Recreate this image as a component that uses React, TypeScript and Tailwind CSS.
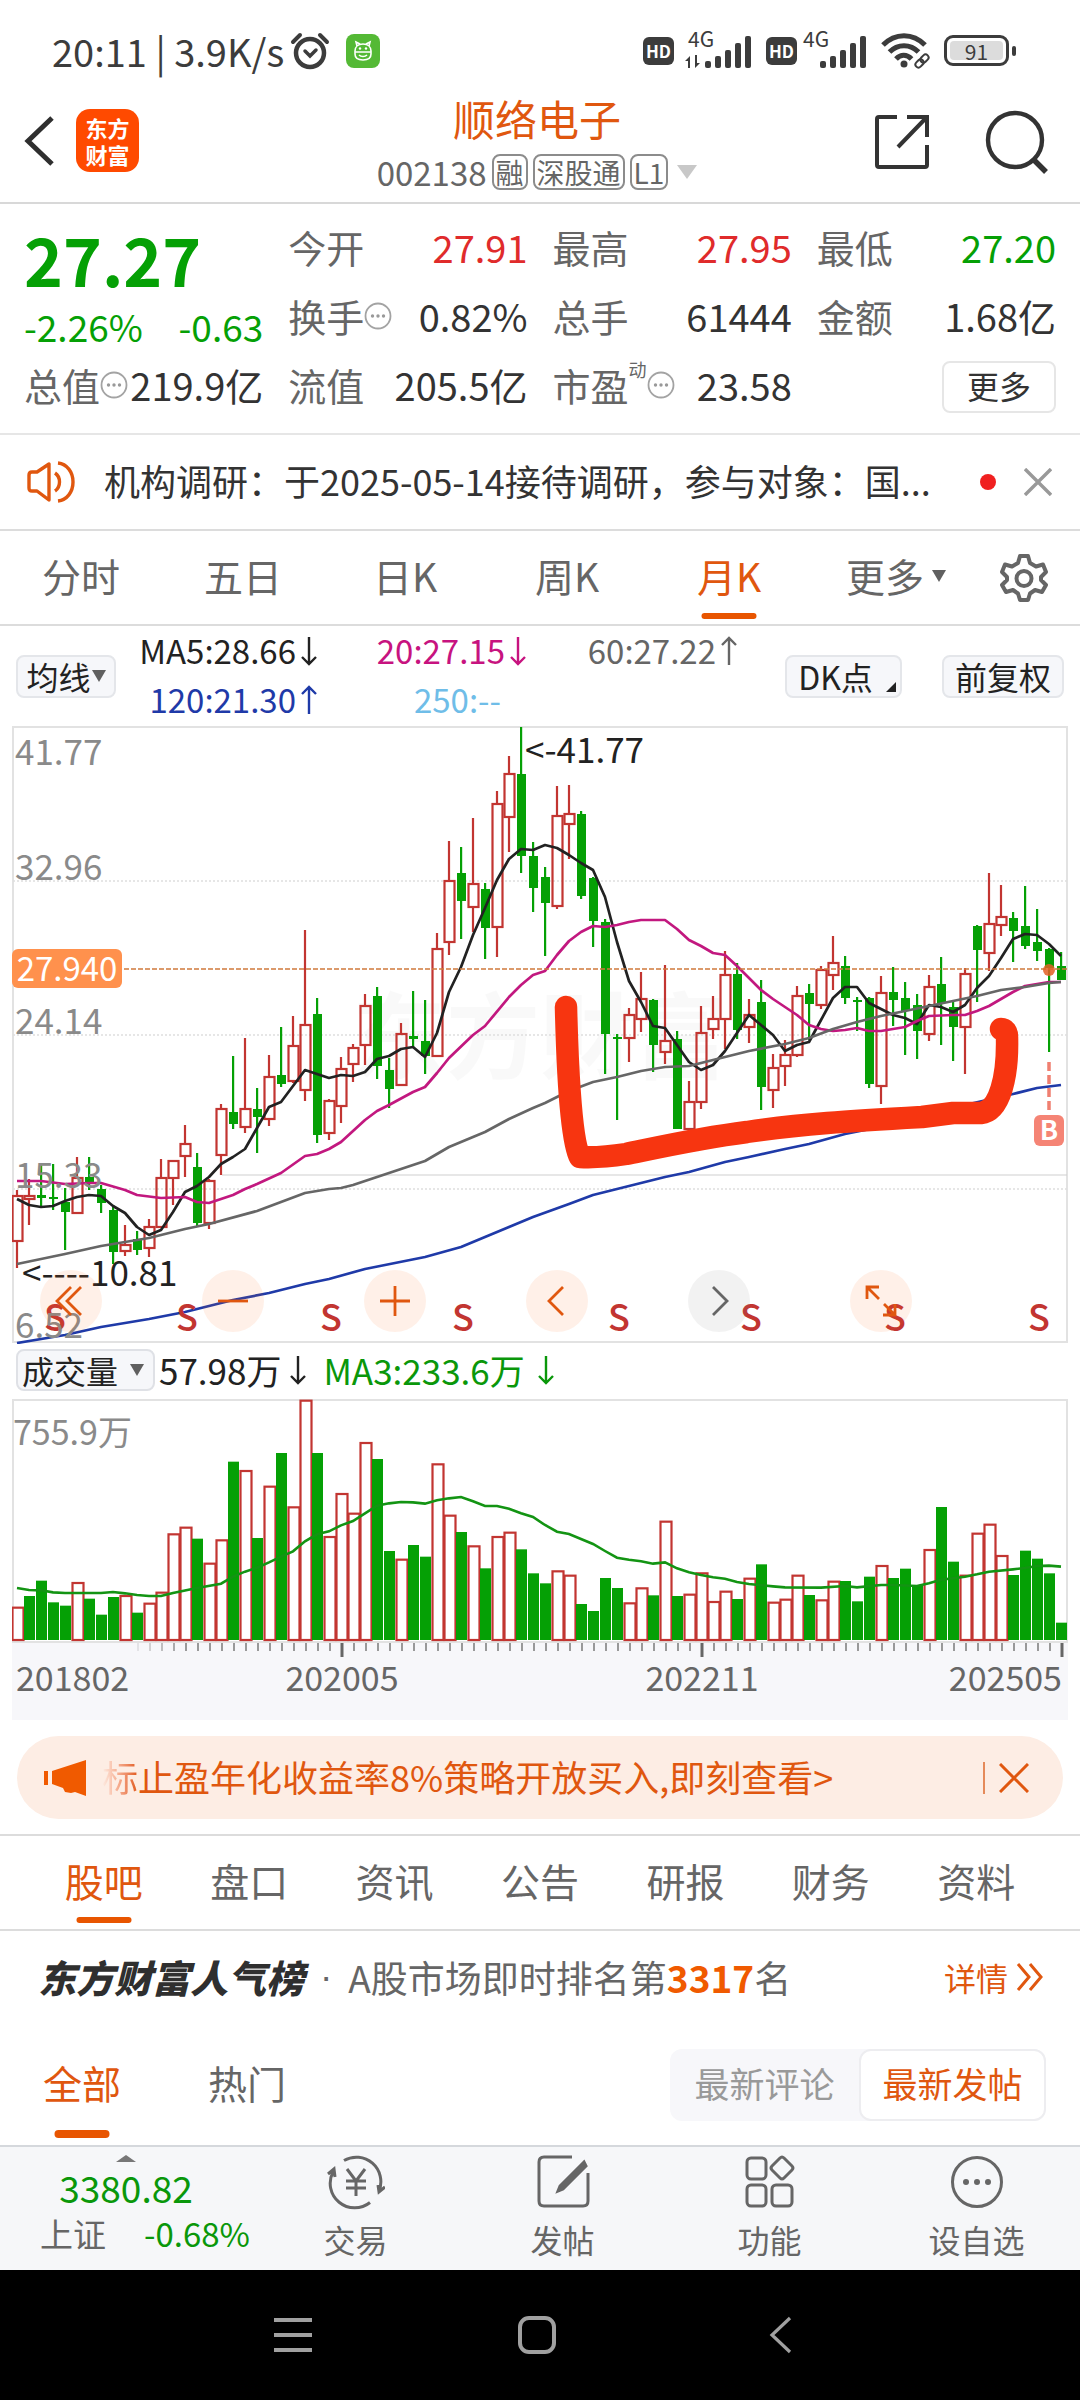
import React from "react";

/* Candles, oldest first: [direction, high, body top, body bottom, low] in chart units. */
type Candle = [1 | -1, number, number, number, number];
const candles: Candle[] = [
  [1, 1190, 1196, 1241, 1268], [1, 1179, 1196, 1199, 1225], [-1, 1163, 1195, 1198, 1207], [-1, 1164, 1197, 1199, 1210],
  [-1, 1188, 1202, 1212, 1250], [1, 1157, 1178, 1213, 1213], [-1, 1157, 1177, 1184, 1190], [-1, 1185, 1189, 1203, 1213],
  [-1, 1205, 1210, 1252, 1264], [1, 1225, 1245, 1251, 1256], [-1, 1231, 1239, 1250, 1255], [1, 1219, 1227, 1248, 1257],
  [1, 1159, 1178, 1227, 1227], [1, 1160, 1161, 1178, 1205], [1, 1125, 1144, 1156, 1177], [-1, 1153, 1167, 1223, 1226],
  [1, 1179, 1181, 1223, 1229], [1, 1104, 1109, 1155, 1175], [-1, 1056, 1112, 1124, 1129], [1, 1038, 1109, 1127, 1133],
  [-1, 1088, 1109, 1117, 1153], [1, 1055, 1077, 1119, 1126], [-1, 1027, 1075, 1084, 1087], [1, 1016, 1046, 1081, 1083],
  [1, 930, 1025, 1090, 1101], [-1, 998, 1014, 1135, 1143], [1, 1099, 1101, 1133, 1140], [1, 1057, 1069, 1106, 1123],
  [1, 1044, 1048, 1064, 1082], [1, 994, 1006, 1045, 1065], [-1, 987, 996, 1066, 1079], [-1, 1058, 1070, 1089, 1108],
  [1, 1023, 1034, 1085, 1085], [-1, 991, 1036, 1039, 1047], [-1, 1000, 1041, 1056, 1074], [1, 933, 949, 1056, 1056],
  [1, 841, 881, 942, 955], [-1, 847, 873, 901, 939], [1, 818, 884, 907, 932], [-1, 883, 889, 928, 959],
  [1, 791, 804, 927, 957], [1, 756, 774, 817, 852], [-1, 727, 774, 856, 873], [-1, 842, 856, 888, 912],
  [-1, 867, 877, 903, 956], [1, 786, 816, 906, 909], [1, 785, 814, 824, 859], [-1, 811, 814, 896, 899],
  [-1, 877, 878, 921, 947], [-1, 919, 922, 1034, 1074], [-1, 1034, 1037, 1038, 1120], [1, 1008, 1015, 1038, 1062],
  [1, 972, 999, 1019, 1032], [-1, 999, 1000, 1045, 1072], [1, 965, 1041, 1052, 1064], [-1, 1031, 1039, 1129, 1129],
  [1, 1081, 1102, 1129, 1131], [1, 1006, 1033, 1102, 1109], [1, 996, 1019, 1029, 1039], [1, 951, 975, 1019, 1049],
  [-1, 963, 974, 1030, 1039], [1, 999, 1015, 1027, 1043], [-1, 980, 1002, 1087, 1110], [1, 1054, 1068, 1090, 1108],
  [1, 1040, 1055, 1066, 1086], [1, 986, 996, 1055, 1057], [-1, 984, 993, 1004, 1040], [1, 966, 970, 1005, 1009],
  [1, 936, 963, 975, 990], [-1, 956, 966, 998, 1004], [-1, 997, 1000, 1001, 1031], [-1, 997, 998, 1084, 1088],
  [1, 976, 993, 1086, 1104], [-1, 967, 992, 1000, 1026], [-1, 982, 998, 1011, 1055], [-1, 994, 1005, 1031, 1059],
  [1, 975, 987, 1034, 1041], [-1, 957, 984, 1003, 1045], [-1, 1002, 1007, 1027, 1061], [1, 968, 974, 1027, 1074],
  [-1, 925, 926, 950, 1002], [1, 873, 924, 953, 971], [1, 885, 917, 925, 936], [-1, 912, 918, 931, 962],
  [-1, 886, 926, 946, 949], [-1, 909, 942, 951, 961], [-1, 948, 949, 968, 1052], [-1, 952, 966, 980, 980],
];

/* Volume bars: [direction, bar height in thirds of a chart unit]. */
const volumes: [1 | -1, number][] = [
  [1, 97], [-1, 132], [-1, 178], [-1, 113], [-1, 103], [1, 171], [-1, 124], [-1, 76], [-1, 129], [1, 132], [-1, 82], [1, 109],
  [1, 142], [1, 317], [1, 337], [-1, 304], [1, 229], [1, 299], [-1, 535], [1, 507], [-1, 306], [1, 460], [-1, 561], [1, 398],
  [1, 718], [-1, 561], [1, 309], [1, 438], [1, 379], [1, 591], [-1, 543], [-1, 267], [1, 241], [-1, 285], [-1, 250], [1, 527],
  [1, 373], [-1, 324], [1, 281], [-1, 215], [1, 309], [1, 322], [-1, 272], [-1, 200], [-1, 170], [1, 206], [1, 193], [-1, 108],
  [-1, 87], [-1, 186], [-1, 156], [1, 110], [1, 155], [-1, 134], [1, 355], [-1, 132], [1, 136], [1, 200], [1, 114], [1, 145],
  [-1, 123], [1, 184], [-1, 227], [1, 112], [1, 121], [1, 193], [-1, 135], [1, 119], [1, 175], [-1, 177], [-1, 116], [-1, 190],
  [1, 222], [-1, 186], [-1, 214], [-1, 163], [1, 270], [-1, 399], [-1, 235], [1, 193], [1, 319], [1, 346], [1, 252], [-1, 195],
  [-1, 268], [-1, 244], [-1, 200], [-1, 52],
];

const ma5 = [
  1199, 1205, 1207, 1206, 1201, 1197, 1195, 1196, 1206, 1213, 1227, 1235, 1230, 1212, 1192, 1186, 1177, 1164, 1157, 1149, 1128,
  1107, 1102, 1086, 1070, 1074, 1078, 1075, 1076, 1072, 1059, 1056, 1049, 1047, 1057, 1033, 992, 967, 935, 908, 880, 859, 849,
  850, 845, 848, 855, 863, 870, 897, 942, 981, 1002, 1026, 1028, 1045, 1062, 1070, 1065, 1051, 1033, 1015, 1025, 1035, 1051,
  1045, 1042, 1020, 998, 987, 987, 1003, 1009, 1015, 1018, 1024, 1005, 1007, 1012, 1005, 988, 976, 958, 939, 934, 935, 944, 956,
];

/* Slower averages are kept as [month index, y] knots. */
type Knot = [number, number];
const ma20: Knot[] = [
  [0, 1181], [2, 1181], [4, 1184], [6, 1183], [7, 1183], [9, 1190], [10, 1195], [12, 1198], [14, 1197], [15, 1202], [16, 1203],
  [18, 1195], [19, 1189], [20, 1184], [22, 1173], [24, 1156], [25, 1154], [26, 1149], [27, 1142], [29, 1120], [30, 1111],
  [31, 1105], [33, 1092], [34, 1087], [35, 1073], [36, 1058], [38, 1035], [39, 1026], [41, 997], [42, 985], [43, 975], [44, 971],
  [45, 955], [46, 941], [47, 932], [48, 926], [49, 927], [50, 925], [51, 922], [52, 920], [54, 920], [55, 929], [56, 940],
  [57, 946], [58, 953], [59, 955], [60, 966], [61, 978], [62, 990], [63, 999], [65, 1015], [66, 1025], [67, 1029], [68, 1031],
  [69, 1030], [70, 1028], [71, 1031], [72, 1031], [74, 1027], [75, 1021], [76, 1016], [78, 1015], [79, 1015], [80, 1011],
  [81, 1006], [83, 992], [84, 986], [86, 982], [87, 982],
];
const ma60: Knot[] = [
  [0, 1264], [4, 1254], [7, 1246], [11, 1238], [14, 1229], [16, 1224], [20, 1211], [24, 1193], [26, 1189], [27, 1188], [28, 1185],
  [30, 1177], [32, 1169], [34, 1161], [36, 1147], [38, 1137], [39, 1132], [41, 1119], [43, 1108], [44, 1103], [46, 1091],
  [48, 1082], [50, 1077], [52, 1071], [54, 1067], [56, 1066], [58, 1060], [59, 1057], [61, 1051], [64, 1044], [66, 1038],
  [68, 1029], [70, 1022], [72, 1016], [74, 1011], [76, 1006], [78, 1001], [80, 996], [82, 990], [84, 987], [86, 983], [87, 982],
];
const ma120: Knot[] = [
  [0, 1343], [4, 1335], [7, 1327], [11, 1319], [14, 1312], [18, 1300], [21, 1293], [24, 1284], [26, 1279], [29, 1269], [34, 1257],
  [37, 1247], [39, 1237], [41, 1227], [43, 1217], [46, 1204], [48, 1195], [50, 1189], [54, 1177], [56, 1172], [59, 1162],
  [61, 1157], [64, 1149], [66, 1144], [69, 1134], [74, 1122], [79, 1105], [83, 1094], [85, 1088], [87, 1085],
];
const volumeMa: Knot[] = [
  [0, 744], [1, 750], [2, 751], [3, 757], [4, 759], [7, 759], [8, 756], [9, 760], [10, 765], [11, 768], [12, 768], [13, 759],
  [15, 744], [17, 731], [18, 710], [19, 695], [20, 683], [21, 667], [22, 650], [23, 634], [24, 604], [25, 583], [26, 574],
  [27, 556], [28, 543], [29, 520], [30, 497], [31, 490], [32, 486], [33, 487], [34, 491], [35, 481], [36, 475], [37, 471],
  [38, 484], [39, 498], [40, 498], [41, 506], [42, 520], [43, 531], [44, 555], [45, 575], [46, 582], [48, 612], [49, 633],
  [50, 653], [51, 659], [52, 664], [53, 671], [54, 667], [55, 685], [56, 697], [57, 705], [58, 712], [59, 716], [60, 726],
  [61, 732], [63, 739], [64, 742], [67, 743], [69, 738], [70, 742], [72, 735], [73, 735], [75, 738], [76, 730], [77, 719],
  [79, 710], [80, 703], [81, 695], [83, 688], [84, 684], [85, 678], [86, 677], [87, 680],
];

const RED = "#c23531";
const GREEN = "#05a005";
const monthX = (i: number) => 17 + 12 * i;
const toPoints = (knots: Knot[]) => knots.map(([i, y]) => `${monthX(i)},${y}`).join(" ");

function Arrow({ down = false }: { down?: boolean }) {
  return (
    <svg className="h-[30px] w-[18px] shrink-0" viewBox="0 0 18 30" fill="none" stroke="currentColor" strokeWidth="2.4" aria-hidden="true">
      {down ? <path d="M9 1v27M2 21l7 7 7-7" /> : <path d="M9 29V2M2 9l7-7 7 7" />}
    </svg>
  );
}

function Caret() {
  return (
    <svg className="h-[12px] w-[14px] shrink-0" viewBox="0 0 14 12" fill="#606060" aria-hidden="true">
      <path d="M0 0h14L7 12z" />
    </svg>
  );
}

function InfoDots() {
  return (
    <svg className="h-7 w-7 shrink-0" viewBox="0 0 28 28" aria-hidden="true">
      <circle cx="14" cy="14" r="12.5" fill="none" stroke="#a3a3a3" strokeWidth="1.8" />
      <circle cx="8.5" cy="14" r="1.7" fill="#999" />
      <circle cx="14" cy="14" r="1.7" fill="#999" />
      <circle cx="19.5" cy="14" r="1.7" fill="#999" />
    </svg>
  );
}

function HdBadge() {
  return <span className="flex h-7 w-[31px] items-center justify-center rounded-md bg-[#3c3c3c] text-[17px] leading-[24px] font-bold text-white">HD</span>;
}

function Signal({ data = false }: { data?: boolean }) {
  return (
    <svg className="h-[38px] w-[66px]" viewBox="0 0 66 38" fill="#3c3c3c" overflow="visible" aria-label="4G 信号">
      <text x="1" y="15" fontSize="21">4G</text>
      {data && <path d="M3 36V24l-5 5h3v7zM8 23v13l5-5h-3v-8z" />}
      <rect x="18" y="29" width="6" height="7" rx="2" />
      <rect x="28" y="24" width="6" height="12" rx="2" />
      <rect x="38" y="18" width="6" height="18" rx="2" />
      <rect x="48" y="11" width="6" height="25" rx="2" />
      <rect x="58" y="4" width="6" height="32" rx="2" />
    </svg>
  );
}

function StatusBar() {
  return (
    <div className="flex h-[105px] items-center justify-between pr-[64px] pb-1 pl-[52px] text-[#3c3c3c]">
      <div className="flex items-center gap-1">
        <span className="text-[38px] leading-[50px] whitespace-pre">20:11 | 3.9K/s</span>
        <svg className="ml-0.5 h-[38px] w-[40px]" viewBox="0 0 40 38" fill="none" stroke="#3c3c3c" strokeLinecap="round" aria-label="闹钟">
          <circle cx="20" cy="21" r="14" strokeWidth="4.5" />
          <path d="M3 10 10 3M37 10 30 3" strokeWidth="4" />
          <path d="m15 19 5 5 6-6" strokeWidth="3.5" />
        </svg>
        <svg className="ml-3 h-[34px] w-[34px]" viewBox="0 0 34 34" aria-label="应用通知">
          <rect width="34" height="34" rx="8" fill="#54b935" />
          <g fill="none" stroke="#fff" strokeWidth="1.6">
            <path d="M9 17c0-4 3-7 8-7s8 3 8 7v3c0 4-3 6-8 6s-8-2-8-6zM11 12l-1-4 4 2M23 12l1-4-4 2M9 18h16M13 21c2 2 6 2 8 0" />
          </g>
          <circle cx="14" cy="14.5" r="1.2" fill="#fff" />
          <circle cx="20" cy="14.5" r="1.2" fill="#fff" />
        </svg>
      </div>
      <div className="flex items-center gap-[13px]">
        <HdBadge />
        <Signal data />
        <HdBadge />
        <div className="-ml-2"><Signal /></div>
        <svg className="h-[36px] w-[50px]" viewBox="0 0 50 36" fill="none" stroke="#3c3c3c" strokeWidth="5" aria-label="无线网络">
          <path d="M2 12C14-.5 32-.5 44 12M8.500 19c8-8.500 21-8.500 29 0M15 26c4.500-5 11-5 15.500 0" />
          <circle cx="23" cy="31" r="3.5" fill="#3c3c3c" stroke="none" />
          <g strokeWidth="2" transform="rotate(-45 41 28)">
            <rect x="33" y="25" width="9" height="6" rx="3" />
            <rect x="40" y="25" width="9" height="6" rx="3" />
          </g>
        </svg>
        <div className="flex items-center gap-[3px]">
          <span className="flex h-[31px] w-[65px] rounded-[9px] border-[3px] border-[#3c3c3c] p-[3px]">
            <span className="flex flex-1 items-center justify-center rounded bg-[#dcdcdc] text-[21px] leading-[30px]">91</span>
          </span>
          <span className="h-[10px] w-1 rounded bg-[#3c3c3c]" />
        </div>
      </div>
    </div>
  );
}

function Header() {
  return (
    <header className="grid h-[99px] grid-cols-[1fr_auto_1fr] items-start border-b-2 border-[#d8d8d8] pr-[30px] pl-6">
      <div className="flex items-center gap-[22px] pt-1">
        <button type="button" aria-label="返回">
          <svg className="h-[50px] w-[30px]" viewBox="0 0 30 50" fill="none" stroke="#2f2f2f" strokeWidth="5">
            <path d="M28 2 4 25l24 23" />
          </svg>
        </button>
        <a href="#home" aria-label="东方财富" className="grid h-[63px] w-[63px] place-content-center rounded-[14px] bg-[#ff4a00] text-center text-[22px] leading-[27px] font-bold text-white">
          东方<br />财富
        </a>
      </div>
      <div className="-mt-3 flex flex-col items-center">
        <h1 className="text-[42px] leading-[50px] text-[#e0570f]">顺络电子</h1>
        <button type="button" className="mt-[10px] flex items-center gap-[5px] text-[33px] leading-[38px] text-[#666]">
          <span>002138</span>
          <span className="flex h-9 items-center rounded-lg border-2 border-[#8c8c8c] px-0.5 text-[28px]">融</span>
          <span className="flex h-9 items-center rounded-lg border-2 border-[#8c8c8c] px-0.5 text-[28px]">深股通</span>
          <span className="flex h-9 items-center rounded-lg border-2 border-[#8c8c8c] px-0.5 text-[28px]">L1</span>
          <svg className="ml-1 h-[14px] w-5" viewBox="0 0 20 14" fill="#c8c8c8" aria-hidden="true"><path d="M0 0h20L10 14z" /></svg>
        </button>
      </div>
      <div className="flex items-center justify-end gap-[55px]">
        <button type="button" aria-label="分享" className="pt-1">
          <svg className="h-[56px] w-[54px]" viewBox="0 0 54 56" fill="none" stroke="#333" strokeWidth="4">
            <path d="M22 3H4q-2 0-2 2v46q0 2 2 2h46q2 0 2-2V31M32 3h20v20M51 4 23 33" />
          </svg>
        </button>
        <button type="button" aria-label="搜索" className="pt-1">
          <svg className="h-[66px] w-[66px]" viewBox="0 0 66 66" fill="none" stroke="#333" strokeWidth="4.4">
            <circle cx="31" cy="31" r="27" />
            <path d="m49 50 13 13" strokeWidth="5.5" />
          </svg>
        </button>
      </div>
    </header>
  );
}

function Stat({ label, value, color = "text-[#333]", info = false, sup }: { label: string; value: string; color?: string; info?: boolean; sup?: string }) {
  return (
    <div className="flex h-[69px] items-center justify-between whitespace-nowrap">
      <dt className="flex items-center text-[38px] text-[#666]">
        {label}
        {sup && <sup className="-top-4 text-[18px]">{sup}</sup>}
        {info && <InfoDots />}
      </dt>
      <dd className={`text-[38px] ${color}`}>{value}</dd>
    </div>
  );
}

function Quote() {
  return (
    <section className="grid h-[231px] grid-cols-4 gap-x-[25px] border-b-2 border-[#e6e6e6] px-6 pt-2 leading-[44px]">
      <div>
        <div className="h-[92px] pt-2 text-[66px] leading-[76px] font-bold text-[#05a005]">27.27</div>
        <div className="flex h-[46px] justify-between text-[37px] text-[#05a005]">
          <span>-2.26%</span>
          <span>-0.63</span>
        </div>
        <dl><Stat label="总值" value="219.9亿" info /></dl>
      </div>
      <dl>
        <Stat label="今开" value="27.91" color="text-[#e02b2b]" />
        <Stat label="换手" value="0.82%" info />
        <Stat label="流值" value="205.5亿" />
      </dl>
      <dl>
        <Stat label="最高" value="27.95" color="text-[#e02b2b]" />
        <Stat label="总手" value="61444" />
        <Stat label="市盈" value="23.58" sup="动" info />
      </dl>
      <div>
        <dl>
          <Stat label="最低" value="27.20" color="text-[#05a005]" />
          <Stat label="金额" value="1.68亿" />
        </dl>
        <button type="button" className="mt-[11px] ml-auto grid h-[52px] w-[114px] place-items-center rounded-lg border-2 border-[#e6e6e6] pb-1 text-[32px] text-[#333]">更多</button>
      </div>
    </section>
  );
}

function NewsRow() {
  return (
    <div className="flex h-[96px] items-center border-b-2 border-[#dcdcdc] pr-[28px] pl-[27px]">
      <svg className="h-[42px] w-[48px] shrink-0" viewBox="0 0 48 42" fill="none" stroke="#e0570f" strokeWidth="3.4" aria-hidden="true">
        <path d="M22 3v36L10 30H5q-3 0-3-3V14q0-3 3-3h5zM28 12c6 4 6 14 0 18M31 2c9 1 15 9 15 19s-6 18-15 19" strokeLinejoin="round" />
      </svg>
      <a href="#news" className="ml-[29px] min-w-0 flex-1 pb-1 text-[36px] leading-[48px] whitespace-nowrap text-[#333]">机构调研：于2025-05-14接待调研，参与对象：国...</a>
      <span className="h-4 w-4 rounded-full bg-[#f02020]" />
      <button type="button" aria-label="关闭公告" className="ml-7">
        <svg className="h-7 w-7" viewBox="0 0 28 28" stroke="#999" strokeWidth="3.4"><path d="m1 1 26 26M27 1 1 27" /></svg>
      </button>
    </div>
  );
}

function PeriodTabs() {
  return (
    <nav className="flex h-[95px] items-stretch border-b-2 border-[#dcdcdc] text-[39px] text-[#666]">
      <div className="grid w-3/4 grid-cols-5">
        {["分时", "五日", "日K", "周K", "月K"].map((t) => (
          <button key={t} type="button" className={t === "月K" ? "relative pb-1 text-[#e0570f]" : "relative pb-1"} aria-current={t === "月K"}>
            {t}
            {t === "月K" && <span className="absolute bottom-[5px] left-1/2 h-[6px] w-[55px] -translate-x-1/2 rounded-full bg-[#e85500]" />}
          </button>
        ))}
      </div>
      <button type="button" className="ml-[36px] flex items-center gap-2 pb-1">
        更多
        <Caret />
      </button>
      <button type="button" aria-label="设置" className="mr-[32px] ml-auto">
        <svg className="h-12 w-12" viewBox="0 0 48 48" fill="none" stroke="#666" strokeWidth="4" strokeLinejoin="round">
          <path d="M20 2h8l2 7 6 3.500 7-2 3 7.500-5 5v3l5 5-4 7-7-2-5 3.500-2 6.500h-8l-2-6.500-5-3.500-7 2-4-7 5-5v-3l-5-5 3-7.500 7 2L18 9z" />
          <circle cx="24" cy="24.5" r="7.5" />
        </svg>
      </button>
    </nav>
  );
}

function AverageRow() {
  const pill = "flex h-[43px] items-center justify-center rounded-lg border-2 border-[#e4e6ea] bg-[#f6f7fa] text-[32px] leading-[38px] whitespace-nowrap text-[#222]";
  return (
    <div className="flex h-[100px] items-center pr-4 pl-4 text-[33px] leading-[49px]">
      <button type="button" className={`${pill} w-[100px] gap-px`}>
        均线
        <Caret />
      </button>
      <div className="ml-[14px] grid grid-cols-[188px_209px_211px] pb-0.5 whitespace-nowrap">
        <span className="flex items-center justify-end gap-1 text-[#222]">MA5:28.66<Arrow down /></span>
        <span className="flex items-center justify-end gap-1 text-[#c7137f]">20:27.15<Arrow down /></span>
        <span className="flex items-center justify-end gap-1 text-[#666]">60:27.22<Arrow /></span>
        <span className="flex items-center justify-end gap-1 text-[#1f3aa8]">120:21.30<Arrow /></span>
        <span className="flex items-center justify-end pr-[26px] text-[#6fbde8]">250:--</span>
      </div>
      <button type="button" className={`${pill} relative ml-auto w-[117px] pr-4`}>
        DK点
        <svg className="absolute right-1 bottom-1 h-[10px] w-[10px]" viewBox="0 0 10 10" fill="#222" aria-hidden="true"><path d="M10 0v10H0z" /></svg>
      </button>
      <button type="button" className={`${pill} ml-[40px] w-[122px]`}>前复权</button>
    </div>
  );
}

const toolIcons: { label: string; muted?: boolean; path: string }[] = [
  { label: "最早", path: "M31 17 17 31l14 14M41 17 27 31l14 14" },
  { label: "缩小", path: "M16 31h30" },
  { label: "放大", path: "M16 31h30M31 16v30" },
  { label: "向前", path: "M37 17 23 31l14 14" },
  { label: "向后", muted: true, path: "M25 17l14 14-14 14" },
  { label: "全屏", path: "M17 29V17h12M18 18l11 11M45 34v11H33M44 44 34 34" },
];

function PriceChart() {
  return (
    <div className="relative mx-3">
      <svg className="block w-full" viewBox="12 726 1056 618" role="img" aria-label="月K线图">
        <rect x="13" y="727" width="1054" height="615" fill="#fff" stroke="#e2e2e2" strokeWidth="2" />
        <text x="352" y="1072" fontSize="94" fontWeight="700" fill="#000" fillOpacity="0.022">东方财富</text>
        <g stroke="#dedede" strokeWidth="1.5" strokeDasharray="2 2">
          <path d="M13 881h1054M13 1035h1054M13 1189h1054" />
        </g>
        <path d="M222 1175h845" stroke="#cfcfcf" strokeWidth="1.2" />
        {candles.map(([dir, high, top, bottom, low], i) => {
          const x = monthX(i);
          return dir > 0 ? (
            <g key={i} stroke={RED} strokeWidth="2.2" fill="none">
              <path d={`M${x} ${high}V${top}M${x} ${bottom}V${low}`} />
              <rect x={x - 4.5} y={top} width="10" height={bottom - top} />
            </g>
          ) : (
            <g key={i} fill={GREEN}>
              <rect x={x - 1} y={high} width="2.2" height={low - high} />
              <rect x={x - 4} y={top} width="9" height={Math.max(2, bottom - top)} />
            </g>
          );
        })}
        <g fill="none" strokeWidth="2.7" strokeLinejoin="round">
          <polyline points={toPoints(ma120)} stroke="#1f3aa8" />
          <polyline points={toPoints(ma5.map((y, i): Knot => [i, y]))} stroke="#222" />
          <polyline points={toPoints(ma20)} stroke="#c2187f" />
          <polyline points={toPoints(ma60)} stroke="#666" />
        </g>
        <path d="M12 969h1055" stroke="#d07a3c" strokeWidth="1.5" strokeDasharray="5 2" />
        <circle cx="1049" cy="970" r="6" fill="#e35f25" fillOpacity="0.85" />
        <path d="M1049 1062v52" stroke="#f07f70" strokeWidth="3.5" strokeDasharray="9 4" />
        <rect x="1034" y="1115" width="30" height="31" rx="6" fill="#f58475" />
        <text x="1049" y="1140" fontSize="27" fontWeight="700" fill="#fff" textAnchor="middle">B</text>
        <g fontSize="36" fontWeight="500" fill={RED} textAnchor="middle">
          {[55, 187, 331, 463, 619, 751, 895, 1039].map((x) => <text key={x} x={x} y="1331">S</text>)}
        </g>
        <g fontSize="35" fill="#8a8a8a">
          <text x="15" y="765">41.77</text>
          <text x="15" y="880">32.96</text>
          <text x="15" y="1034">24.14</text>
          <text x="15" y="1188">15.33</text>
          <text x="15" y="1338">6.52</text>
        </g>
        <rect x="12" y="949" width="110" height="39" rx="6" fill="#ff914d" />
        <text x="67" y="981" fontSize="33" fill="#fff" textAnchor="middle">27.940</text>
        <g fontSize="35" fill="#222">
          <text x="525" y="763">&lt;-41.77</text>
          <text x="22" y="1286">&lt;----10.81</text>
        </g>
        <path d="M566 1007C567 1050 570 1140 580 1157Q600 1158 626 1154C660 1147 700 1138 747 1132C800 1124 850 1121 922 1117L953 1113H981C1000 1111 1008 1076 1007 1037Q1007 1029 1001 1029" fill="none" stroke="#f73510" strokeWidth="22.5" strokeLinecap="round" strokeLinejoin="round" />
      </svg>
      <div className="absolute bottom-[12px] left-[28px] flex gap-[100px]">
        {toolIcons.map(({ label, muted, path }) => (
          <button key={label} type="button" aria-label={label} className={muted ? "h-[62px] w-[62px] rounded-full bg-[#808080]/10" : "h-[62px] w-[62px] rounded-full bg-[#ff6a1f]/10"}>
            <svg viewBox="0 0 62 62" fill="none" strokeWidth="2.8" stroke={muted ? "#666" : "#e0570f"}><path d={path} /></svg>
          </button>
        ))}
      </div>
    </div>
  );
}

function VolumeChart() {
  return (
    <div className="mx-3">
      <div className="flex h-[55px] items-center pb-1 pl-1 text-[35px] leading-[44px] whitespace-nowrap">
        <button type="button" className="flex h-[42px] w-[139px] items-center gap-3 rounded-lg border-2 border-[#dfe1e6] bg-[#f6f7fa] pl-1 text-[32px] leading-[38px] text-[#222]">
          成交量
          <Caret />
        </button>
        <span className="ml-1 flex items-center gap-2 text-[#222]">57.98万<Arrow down /></span>
        <span className="ml-4 flex items-center gap-3 text-[#0a970a]">MA3:233.6万<Arrow down /></span>
      </div>
      <svg className="block w-full" viewBox="12 1399 1056 321" role="img" aria-label="成交量图">
        <rect x="12" y="1642" width="1056" height="78" fill="#f7f7fa" />
        <rect x="13" y="1400" width="1054" height="242" fill="#fff" stroke="#e2e2e2" strokeWidth="2" />
        {volumes.map(([dir, h], i) =>
          dir > 0 ? (
            <rect key={i} x={monthX(i) - 4.5} y={1640 - h / 3} width="11" height={h / 3} fill="#fff" stroke={RED} strokeWidth="2.2" />
          ) : (
            <rect key={i} x={monthX(i) - 5} y={1640 - h / 3} width="11" height={h / 3} fill={GREEN} />
          ),
        )}
        <polyline points={toPoints(volumeMa.map(([i, v]): Knot => [i, 1340 + v / 3]))} fill="none" stroke="#139413" strokeWidth="2.6" />
        {volumes.map((_, i) => {
          const major = i === 27 || i === 57 || i === 87;
          return i < 10 ? null : (
            <path key={i} d={`M${monthX(i) + 1} 1643v${major ? 14 : 8}`} stroke={major ? "#666" : "#999"} strokeWidth={major ? 3 : 2} opacity={i < 14 ? (i - 9) / 5 : 1} />
          );
        })}
        <text x="13" y="1445" fontSize="34" fill="#8a8a8a">755.9万</text>
        <g fontSize="34" fill="#666">
          <text x="16" y="1691">201802</text>
          <text x="342" y="1691" textAnchor="middle">202005</text>
          <text x="702" y="1691" textAnchor="middle">202211</text>
          <text x="1062" y="1691" textAnchor="end">202505</text>
        </g>
      </svg>
    </div>
  );
}

function Promo() {
  return (
    <div className="mx-[17px] mt-4 flex h-[83px] items-center rounded-full bg-[#fdede4] pr-[34px] pl-[27px] text-[#e0570f]">
      <svg className="h-9 w-[42px] shrink-0" viewBox="0 0 42 36" fill="#f05a00" aria-hidden="true">
        <path d="M0 11h4v14H0zM8 11 42 0v36l-11-4-4 1-6-1-2-4-11-4z" />
      </svg>
      <a href="#promo" className="ml-4 min-w-0 flex-1 pb-1 text-[36px] leading-[48px] whitespace-nowrap"><span className="bg-linear-to-r from-[#fdede4] to-[#e0570f] bg-clip-text text-transparent">标</span>止盈年化收益率8%策略开放买入,即刻查看&gt;</a>
      <span className="h-8 w-0.5 bg-[#e58a5a]" />
      <button type="button" aria-label="关闭推广" className="ml-[14px]">
        <svg className="h-[30px] w-[30px]" viewBox="0 0 30 30" stroke="currentColor" strokeWidth="3"><path d="m1 1 28 28M29 1 1 29" /></svg>
      </button>
    </div>
  );
}

function SectionTabs() {
  return (
    <nav className="mt-[15px] grid h-[97px] grid-cols-7 border-y-2 border-[#dcdcdc] px-[31px] text-[39px] text-[#666]">
      {["股吧", "盘口", "资讯", "公告", "研报", "财务", "资料"].map((t, i) => (
        <button key={t} type="button" className={i === 0 ? "relative pb-1 text-[#e0570f]" : "relative pb-1"}>
          {t}
          {i === 0 && <span className="absolute bottom-[6px] left-1/2 h-[6px] w-[55px] -translate-x-1/2 rounded-full bg-[#e85500]" />}
        </button>
      ))}
    </nav>
  );
}

function Forum() {
  return (
    <section>
      <div className="flex h-[96px] items-center pr-[36px] pb-1 pl-[38px] text-[37px] leading-[48px] whitespace-nowrap text-[#666]">
        <h2 className="text-[38px] font-black text-[#2f2f2f] italic">东方财富人气榜</h2>
        <span className="mx-4 font-['Liberation_Sans']">·</span>
        <p>A股市场即时排名第<b className="font-bold text-[#f05a00]">3317</b>名</p>
        <a href="#rank" className="ml-auto flex items-center gap-2 text-[32px] text-[#e0570f]">
          详情
          <svg className="h-7 w-7" viewBox="0 0 28 28" fill="none" stroke="currentColor" strokeWidth="3"><path d="m2 1 11 13L2 27M14 1l11 13-11 13" /></svg>
        </a>
      </div>
      <div className="flex h-[118px] justify-between pr-[34px] pl-[43px]">
        <div className="flex gap-[87px] pb-2 text-[39px] text-[#666]">
          <button type="button" className="relative text-[#e0570f]">
            全部
            <span className="absolute -bottom-px left-1/2 h-2 w-[55px] -translate-x-1/2 rounded-full bg-[#e85500]" />
          </button>
          <button type="button">热门</button>
        </div>
        <div className="mt-[22px] flex h-[72px] rounded-xl bg-[#f7f7fa] text-[35px] text-[#999]">
          <button type="button" className="w-[189px] pb-1">最新评论</button>
          <button type="button" className="w-[187px] rounded-xl border-2 border-[#ededf0] bg-white pb-1 text-[#e0570f]">最新发帖</button>
        </div>
      </div>
    </section>
  );
}

const actions: { label: string; icon: React.ReactNode }[] = [
  {
    label: "交易",
    icon: (
      <>
        <path d="M17 7.500A24.500 24.500 0 0 1 52 38M43 49.500A24.500 24.500 0 0 1 6 19M1 21l6-5 1 8M58 34l-6 5-1-7" />
        <path d="m20 16 9 12 9-12M19 28h20M19 35h20M29 28v15" />
      </>
    ),
  },
  {
    label: "发帖",
    icon: (
      <>
        <path d="M38 4H10q-5 0-5 5v39q0 5 5 5h39q5 0 5-5V20" />
        <path d="M50 9 26 33l-2 5 5-2 23-23z" fill="currentColor" />
      </>
    ),
  },
  {
    label: "功能",
    icon: (
      <>
        <rect x="6" y="5" width="19" height="21" rx="4" />
        <rect x="6" y="32" width="19" height="21" rx="4" />
        <rect x="31" y="32" width="20" height="21" rx="4" />
        <path d="M39 5q2-2 4 0l8 8q2 2 0 4l-8 8q-2 2-4 0l-8-8q-2-2 0-4z" />
      </>
    ),
  },
  {
    label: "设自选",
    icon: (
      <>
        <circle cx="29" cy="29" r="24.5" />
        <g fill="currentColor" stroke="none"><circle cx="18" cy="29" r="3" /><circle cx="29" cy="29" r="3" /><circle cx="40" cy="29" r="3" /></g>
      </>
    ),
  },
];

function BottomBar() {
  return (
    <footer className="flex h-[125px] border-t-2 border-[#d5d8dc] bg-[#f6f7f9] text-[#666]">
      <button type="button" className="flex w-[252px] flex-col items-center justify-start pt-2 text-[#0a970a]">
        <svg className="h-[7px] w-5" viewBox="0 0 20 7" fill="#777" aria-hidden="true"><path d="M0 7h20L10 0z" /></svg>
        <span className="text-[37px] leading-[50px]">3380.82</span>
        <span className="flex gap-[38px] pl-[38px] text-[33px] leading-[42px]"><span className="text-[#666]">上证</span><span>-0.68%</span></span>
      </button>
      <div className="grid flex-1 grid-cols-4">
        {actions.map(({ label, icon }) => (
          <button key={label} type="button" className="flex flex-col items-center justify-start pt-[6px] text-[32px] leading-[56px]">
            <svg className="h-[58px] w-[58px]" viewBox="0 0 58 58" fill="none" stroke="currentColor" strokeWidth="3">{icon}</svg>
            {label}
          </button>
        ))}
      </div>
    </footer>
  );
}

function SystemNav() {
  return (
    <div className="flex h-[130px] items-center justify-center gap-[206px] bg-black pr-[6px]">
      <button type="button" aria-label="最近任务">
        <svg className="h-[38px] w-[38px]" viewBox="0 0 38 38" stroke="#a0a0a0" strokeWidth="4"><path d="M0 4h38M0 19h38M0 34h38" /></svg>
      </button>
      <button type="button" aria-label="主屏幕">
        <svg className="h-[38px] w-[38px]" viewBox="0 0 38 38" fill="none" stroke="#a0a0a0" strokeWidth="4"><rect x="2" y="2" width="34" height="34" rx="9" /></svg>
      </button>
      <button type="button" aria-label="系统返回">
        <svg className="h-[38px] w-[38px]" viewBox="0 0 38 38" fill="none" stroke="#a0a0a0" strokeWidth="3.2"><path d="M28 2 10 19l18 17" /></svg>
      </button>
    </div>
  );
}

export default function App() {
  return (
    <main className="w-full bg-white font-['Noto_Sans_CJK_SC','Liberation_Sans',sans-serif]">
      <StatusBar />
      <Header />
      <Quote />
      <NewsRow />
      <PeriodTabs />
      <AverageRow />
      <PriceChart />
      <VolumeChart />
      <Promo />
      <SectionTabs />
      <Forum />
      <BottomBar />
      <SystemNav />
    </main>
  );
}
